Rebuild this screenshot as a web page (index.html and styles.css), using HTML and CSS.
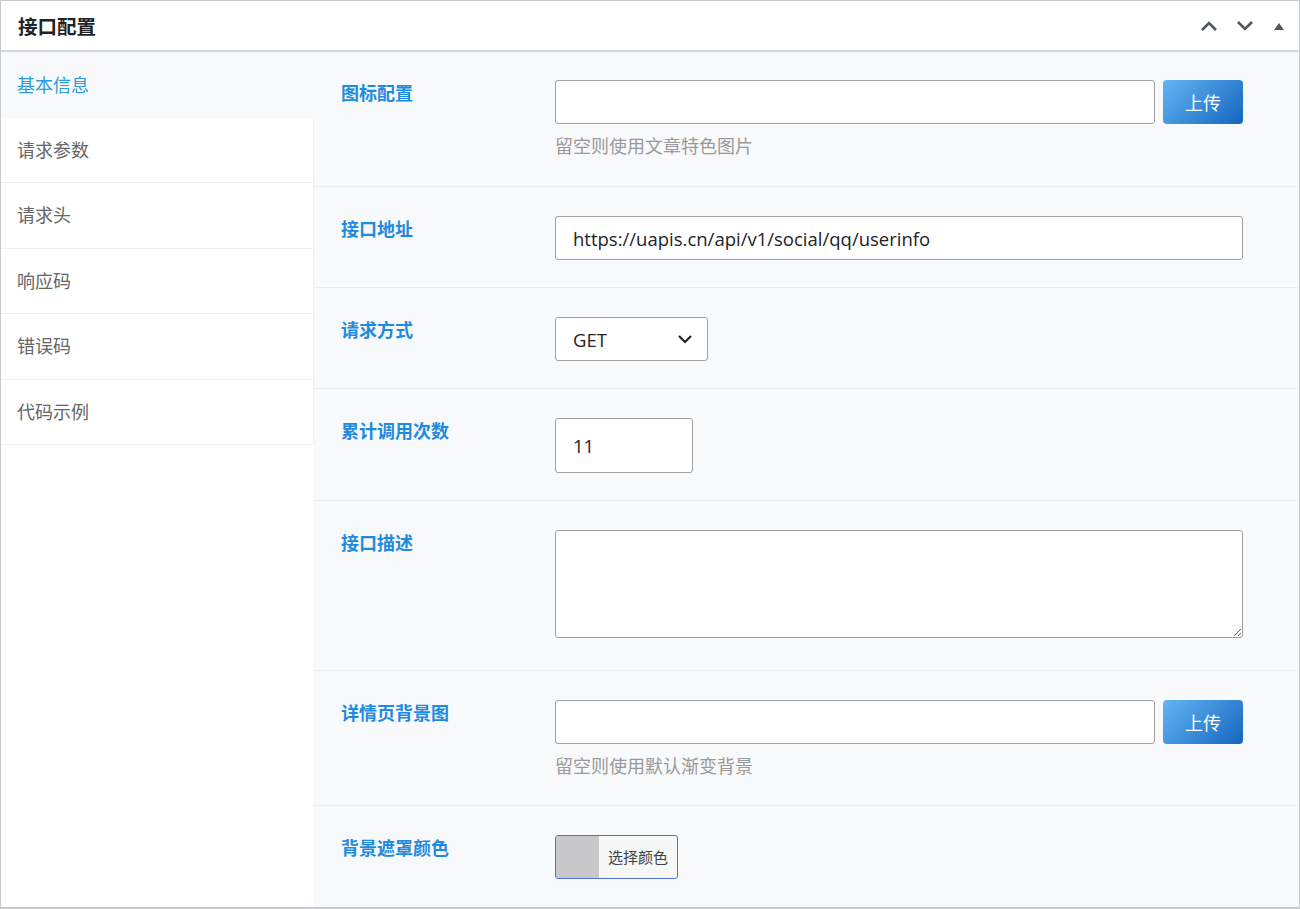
FILE: index.html
```html
<!DOCTYPE html>
<html lang="zh-CN">
<head>
    <meta charset="UTF-8">
    <title>接口配置</title>
    <link rel="stylesheet" href="styles.css">
</head>
<body>
    <div class="postbox">
        <div class="postbox-header">
            <h2>接口配置</h2>
            <div class="handle-actions">
                <svg width="20" height="20" viewBox="0 0 20 20"><path d="M3 14 L10 7 L17 14" fill="none" stroke="#50575e" stroke-width="2.6"/></svg>
                <svg width="20" height="20" viewBox="0 0 20 20"><path d="M3 6 L10 13 L17 6" fill="none" stroke="#50575e" stroke-width="2.6"/></svg>
                <svg width="12" height="12" viewBox="0 0 12 12"><path d="M1 10 L6 3 L11 10 Z" fill="#50575e"/></svg>
            </div>
        </div>

        <div class="inside">
            <ul class="tabs">
                <li class="active">基本信息</li>
                <li>请求参数</li>
                <li>请求头</li>
                <li>响应码</li>
                <li>错误码</li>
                <li>代码示例</li>
            </ul>

            <div class="panel">
                <div class="field first">
                    <label>图标配置</label>
                    <div class="control">
                        <div class="upload-row">
                            <input type="text" class="text-input short">
                            <button class="upload">上传</button>
                        </div>
                        <p class="desc">留空则使用文章特色图片</p>
                    </div>
                </div>

                <div class="field">
                    <label>接口地址</label>
                    <div class="control">
                        <input type="text" class="text-input" value="https://uapis.cn/api/v1/social/qq/userinfo">
                    </div>
                </div>

                <div class="field">
                    <label>请求方式</label>
                    <div class="control">
                        <div class="select-box">
                            <span>GET</span>
                            <svg width="16" height="16" viewBox="0 0 16 16"><path d="M2 5 L8 11 L14 5" fill="none" stroke="#1d2327" stroke-width="2.2"/></svg>
                        </div>
                    </div>
                </div>

                <div class="field">
                    <label>累计调用次数</label>
                    <div class="control">
                        <input type="text" class="text-input number" value="11">
                    </div>
                </div>

                <div class="field tall">
                    <label>接口描述</label>
                    <div class="control">
                        <textarea class="textarea"></textarea>
                    </div>
                </div>

                <div class="field">
                    <label>详情页背景图</label>
                    <div class="control">
                        <div class="upload-row">
                            <input type="text" class="text-input short">
                            <button class="upload">上传</button>
                        </div>
                        <p class="desc">留空则使用默认渐变背景</p>
                    </div>
                </div>

                <div class="field last">
                    <label>背景遮罩颜色</label>
                    <div class="control">
                        <button class="color-btn">
                            <span class="swatch"></span>
                            <span class="color-text">选择颜色</span>
                        </button>
                    </div>
                </div>
            </div>
        </div>
    </div>
</body>
</html>
```

FILE: styles.css
```css
body {
    margin: 0;
    padding: 0;
    font-family: "Open Sans", "Noto Sans CJK SC", sans-serif;
    background-color: #fff;
}

.postbox {
    width: 1300px;
    height: 909px;
    box-sizing: border-box;
    border: 1px solid #c8c9cc;
    border-bottom-width: 2px;
    display: flex;
    flex-direction: column;
    background-color: #fff;
}

.postbox-header {
    height: 49px;
    border-bottom: 2px solid #d4d5d7;
    display: flex;
    align-items: center;
    justify-content: space-between;
    padding: 0 14px 0 17px;
    flex-shrink: 0;
}

.postbox-header h2 {
    margin: 0;
    font-size: 19.5px;
    font-weight: bold;
    color: #1d2327;
}

.handle-actions {
    display: flex;
    align-items: center;
    gap: 16px;
}

.handle-actions svg:last-child {
    margin-left: 2px;
}

.inside {
    flex: 1;
    display: flex;
}

.tabs {
    list-style: none;
    margin: 0;
    padding: 0;
    width: 313px;
    flex-shrink: 0;
    background-color: #fff;
}

.tabs li {
    height: 64.4px;
    line-height: 64.4px;
    padding-left: 16px;
    font-size: 18px;
    color: #666;
    border-bottom: 1px solid #f0f0f1;
    border-right: 1px solid #f0f0f1;
}

.tabs li.active {
    height: 65px;
    line-height: 66px;
    color: #2b9bdc;
    background-color: #f7f9fb;
    border-right-color: #f7f9fb;
    border-bottom: 1px solid #f7f9fb;
}

.panel {
    flex: 1;
    background-color: #f8f9fb;
}

.field {
    display: flex;
    padding: 29px 55px 27px 27px;
    border-bottom: 1px solid #ececee;
}

.field.first {
    padding-top: 28px;
    padding-bottom: 28px;
}

.field.tall {
    padding-bottom: 32px;
}

.field.last {
    border-bottom: none;
}

.field label {
    width: 214px;
    flex-shrink: 0;
    font-size: 18px;
    line-height: 24px;
    margin-top: 1px;
    font-weight: bold;
    color: #1e8ae0;
}

.control {
    flex: 1;
}

.text-input {
    display: block;
    width: 688px;
    height: 44px;
    box-sizing: border-box;
    border: 1px solid #a0a0a0;
    border-radius: 3px;
    background-color: #fff;
    padding: 0 17px;
    font-family: "Open Sans", "Noto Sans CJK SC", sans-serif;
    font-size: 18.5px;
    color: #1d2327;
}

.text-input.short {
    width: 600px;
}

.text-input.number {
    width: 138px;
    height: 55px;
}

.upload-row {
    display: flex;
    gap: 8px;
}

.upload {
    width: 80px;
    height: 44px;
    border: none;
    border-radius: 4px;
    background: linear-gradient(135deg, #62b6f3, #1565c0);
    color: #fff;
    font-family: "Noto Sans CJK SC", sans-serif;
    font-size: 18px;
    cursor: pointer;
}

.desc {
    margin: 10px 0 0;
    font-size: 18px;
    line-height: 24px;
    color: #999;
}

.select-box {
    width: 153px;
    height: 44px;
    box-sizing: border-box;
    border: 1px solid #a0a0a0;
    border-radius: 3px;
    background-color: #fff;
    display: flex;
    align-items: center;
    justify-content: space-between;
    padding: 0 14px 0 17px;
    font-size: 18.5px;
    color: #1d2327;
}

.textarea {
    display: block;
    width: 688px;
    height: 108px;
    box-sizing: border-box;
    border: 1px solid #a0a0a0;
    border-radius: 3px;
    background-color: #fff;
}

.color-btn {
    display: flex;
    width: 123px;
    height: 44px;
    padding: 0;
    border: 1px solid #4f6fd4;
    border-radius: 3px;
    overflow: hidden;
    background-color: #f6f7f7;
    cursor: pointer;
}

.swatch {
    width: 43px;
    height: 100%;
    background-color: #c8c8ca;
}

.color-text {
    flex: 1;
    line-height: 42px;
    font-family: "Noto Sans CJK SC", sans-serif;
    font-size: 15px;
    color: #3c434a;
}
```
